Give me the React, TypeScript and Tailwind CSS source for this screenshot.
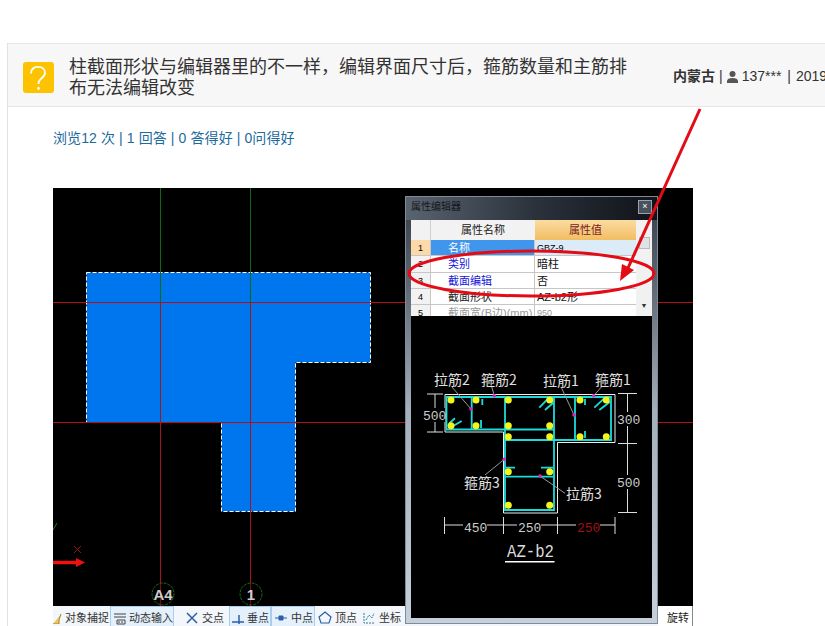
import React from "react";

const cjk = "font-['Liberation_Sans','Noto_Sans_CJK_SC',sans-serif]";

const rows = [
  { no: "1", name: "名称", value: "GBZ-9", active: true },
  { no: "2", name: "类别", value: "暗柱", blue: true },
  { no: "3", name: "截面编辑", value: "否", blue: true },
  { no: "4", name: "截面形状", value: "AZ-b2形" },
  { no: "5", name: "截面宽(B边)(mm)", value: "950", muted: true },
];

const PlanCanvas = () => (
  <svg width="640" height="418" viewBox="53 188 640 418" className="block">
    <rect x="53" y="188" width="640" height="418" fill="#000" />
    <polygon
      points="86.500,272.500 370.500,272.500 370.500,362.500 295.500,362.500 295.500,511.500 221.500,511.500 221.500,422.500 86.500,422.500"
      fill="#0076ee"
      stroke="#fff"
      strokeDasharray="4 2"
    />
    <path d="M160.500 188V302M250.500 188V302" stroke="#0c6a14" />
    <path d="M160.500 302V606M250.500 302V606" stroke="#a5141e" />
    <path d="M53 302.500H693M53 422.500H693" stroke="#b5101a" />
    <circle cx="163" cy="594" r="11" fill="#000" stroke="#1a6a1a" strokeDasharray="3 1" />
    <circle cx="251" cy="594" r="11" fill="#000" stroke="#1a6a1a" strokeDasharray="3 1" />
    <path d="M160.500 583V606M250.500 583V606" stroke="#a5141e" opacity="0.700" />
    <text x="163" y="600" textAnchor="middle" fill="#ccc" fontSize="15" fontFamily="Liberation Sans" fontWeight="700">
      A4
    </text>
    <text x="251" y="600" textAnchor="middle" fill="#ccc" fontSize="15" fontFamily="Liberation Sans" fontWeight="700">
      1
    </text>
    <path d="M53 562.500H78" stroke="#f01010" strokeWidth="3.500" />
    <path d="M76 558L85 562.500L76 567Z" fill="#f01010" />
    <path d="M74 546L81 553M81 546L74 553" stroke="#8a1818" />
    <path d="M53 530L57 523" stroke="#1a7a2a" />
  </svg>
);

const SectionDetail = () => {
  const bars = [
    [451, 400], [476, 400], [508.300, 400], [549.700, 400], [580, 400], [606.300, 400],
    [451, 425.700], [476, 425.700], [508.300, 425.700], [549.700, 425.700],
    [508.300, 436.700], [549.700, 436.700], [580, 436.700], [606.300, 436.700],
    [508.300, 471.700], [549.700, 471.700], [508.300, 505.300], [549.700, 505.300],
  ];
  const labels = [
    ["拉筋2", 434, 385], ["箍筋2", 481, 385], ["拉筋1", 543, 386], ["箍筋1", 595, 385],
    ["箍筋3", 464, 488], ["拉筋3", 566, 499],
  ] as const;
  const points = [
    [494.300, 395.700], [593.700, 395.700], [471, 409], [574, 415], [504.300, 459.300], [540, 476],
  ];
  return (
    <svg width="241" height="302" viewBox="411 316 241 302" className="block">
      <rect x="411" y="316" width="241" height="302" fill="#000" />
      <path d="M445 394.500H615V442.500H557.500V513H503.500V432H445Z" fill="none" stroke="#eee" />
      <path
        d="M446.500 397H611V440H554V510H505V429.500H446.500ZM505 397V429.500M554 397V440M505 429.500H554M505 440H554"
        fill="none"
        stroke="#19dcdc"
        strokeWidth="1.800"
      />
      <path
        d="M471.700 397V429M575 397V440M505 476.700H554M482.300 399V405M481 420V428M585 399V405M585 431V438M506 467.700H515M541 467.700H553"
        fill="none"
        stroke="#19dcdc"
        strokeWidth="1.800"
      />
      <path
        d="M539.300 407.700L548.300 398.300M545 410L553.300 402.700M594.300 407.700L605 397.700M599.300 410L610 401.700M449.300 423.300L455 418.300M449.300 428.300L461.700 421"
        stroke="#19dcdc"
        strokeWidth="1.800"
      />
      {bars.map(([x, y]) => (
        <circle key={`${x}-${y}`} cx={x} cy={y} r="3.500" fill="#f5f51a" />
      ))}
      <path
        d="M451.700 386.700L471 409M491.700 386.700L494.300 395.700M561.700 388.300L574 415M601.700 386.700L593.700 395.700M485 475L504.300 459.300M565 493.300L540 476"
        stroke="#999"
        fill="none"
      />
      {points.map(([x, y]) => (
        <circle key={`${x}-${y}`} cx={x} cy={y} r="1.800" fill="#e020c0" />
      ))}
      <g fill="#e0e0e0" fontSize="14" fontFamily="Noto Sans CJK SC, sans-serif">
        {labels.map(([text, x, y]) => (
          <text key={text} x={x} y={y}>
            {text}
          </text>
        ))}
      </g>
      <path d="M435 394V432M427 394H443M427 432H443" stroke="#ddd" fill="none" />
      <path d="M627.500 393.500V512.500M618 393.500H637M618 443.500H637M618 512.500H637" stroke="#ddd" fill="none" />
      <path d="M444.500 525H615M444.500 517V534M503.500 517V534M557.500 517V534M615 517V534" stroke="#ddd" fill="none" />
      <g fontSize="13" fontFamily="Liberation Mono, monospace" fill="#ccc">
        <rect x="423" y="408" width="22" height="14" fill="#000" />
        <text x="423" y="420">500</text>
        <rect x="616" y="412" width="24" height="14" fill="#000" />
        <text x="617" y="424">300</text>
        <rect x="616" y="475" width="24" height="14" fill="#000" />
        <text x="617" y="487">500</text>
        <rect x="463" y="519" width="24" height="14" fill="#000" />
        <text x="464" y="532">450</text>
        <rect x="517" y="519" width="24" height="14" fill="#000" />
        <text x="518" y="532">250</text>
        <rect x="576" y="519" width="24" height="14" fill="#000" />
        <text x="577" y="532" fill="#a01010">250</text>
      </g>
      <text x="507" y="557" fontSize="18" textLength="47" lengthAdjust="spacingAndGlyphs" fontFamily="Liberation Mono, monospace" fill="#ddd">
        AZ-b2
      </text>
      <path d="M505 561.700H554.500" stroke="#fff" strokeWidth="1.500" />
    </svg>
  );
};

const PropertyDialog = () => (
  <div className="absolute left-[352px] top-[8px] flex h-[428px] w-[253px] flex-col border border-[#7f8b98] bg-gradient-to-b from-[#333c47] via-[#a3afbb] to-[#c6d0da] px-[5px]">
    <div className="-mx-[5px] flex h-[23px] shrink-0 items-center justify-between bg-gradient-to-r from-[#5a6470] via-[#2c333d] to-[#101318] pb-[4px] pl-[5px] pr-[5px]">
      <span className="text-[10px] text-[#14181c]">属性编辑器</span>
      <span className="flex h-[14px] w-[14px] items-center justify-center border border-[#9aa3ad] bg-[#48525e] text-[9px] leading-none text-white">
        ×
      </span>
    </div>
    <div className="flex h-[96px] shrink-0 overflow-hidden bg-white">
      <div className="flex-1">
        <div className="flex h-[20px] text-[11px] text-[#222]">
          <div className="w-[20px] border-r border-[#d0d0d0] bg-[#f2f2f2]" />
          <div className="flex w-[104px] items-center justify-center bg-[#f2f2f2]">属性名称</div>
          <div className="flex flex-1 items-center justify-center bg-gradient-to-b from-[#fbdca0] to-[#f2bd62] text-[#7a1c1c]">
            属性值
          </div>
        </div>
        {rows.map((row) => (
          <div key={row.no} className="flex h-[16.300px] border-b border-[#c6c6c6] text-[11px] leading-[16px]">
            <div
              className={`flex w-[20px] justify-center border-r border-[#c6c6c6] text-[9px] ${
                row.active ? "bg-[#fbd9a8]" : "bg-[#f2f2f2]"
              }`}
            >
              {row.no}
            </div>
            <div
              className={`w-[104px] overflow-hidden whitespace-nowrap border-r border-[#c6c6c6] pl-[17px] ${
                row.active ? "bg-[#3f96ec] text-white" : row.blue ? "text-[#1414d8]" : row.muted ? "text-[#999]" : "text-[#222]"
              }`}
            >
              {row.name}
            </div>
            <div className={`flex-1 pl-[2px] ${row.active ? "bg-[#dcebf8] text-[9px]" : row.muted ? "text-[9px] text-[#999]" : "text-[#111]"}`}>
              {row.value}
            </div>
          </div>
        ))}
      </div>
      <div className="flex w-[16px] shrink-0 flex-col items-center bg-[#f1f1f1] pt-[17px]">
        <div className="h-[12px] w-[11px] border border-[#bbb] bg-[#dfe3e7]" />
        <span className="mt-auto pb-[7px] text-[7px] leading-none text-[#333]">▼</span>
      </div>
    </div>
    <SectionDetail />
  </div>
);

const SnapBar = () => {
  const tools = [
    { label: "对象捕捉", width: "w-[56px]", icon: 12, gap: "gap-0", active: false, shape: <path d="M0 12h6V8l2-6" stroke="#a8861e" fill="#e8c860" /> },
    { label: "动态输入", width: "w-[64px] ml-[1px]", icon: 14, gap: "gap-[2px]", active: true, shape: <path d="M1 3h12M1 6h12M4 9h8v4H4zM6 10v2M9 10v2" stroke="#444" fill="none" /> },
    { label: "交点", width: "w-[41px] ml-[11px]", icon: 14, gap: "gap-[3px]", active: false, shape: <path d="M2 2l10 10M12 2L2 12" stroke="#2a5fa8" strokeWidth="1.500" /> },
    { label: "垂点", width: "w-[42px] ml-[3px]", icon: 12, gap: "gap-[3px]", active: true, shape: <path d="M0 10h12M7 3v9" stroke="#2a5fa8" strokeWidth="1.500" /> },
    { label: "中点", width: "w-[44px]", icon: 14, gap: "gap-[3px]", active: true, shape: <path d="M1 7h12M5 5h4v4H5z" stroke="#2a5fa8" fill="#2a5fa8" /> },
    { label: "顶点", width: "w-[39px] ml-[3px]", icon: 14, gap: "gap-[3px]", active: false, shape: <path d="M7 1l6 5-2 6H3L1 6z" stroke="#2a5fa8" fill="none" strokeWidth="1.200" /> },
    { label: "坐标", width: "w-[39px] ml-[5px]", icon: 14, gap: "gap-[3px]", active: false, shape: <path d="M2 2v10h10M4 9l3-5 3 3 2-5" stroke="#2a7f9a" fill="none" strokeDasharray="2 1" /> },
  ];
  return (
    <div className="relative flex h-[24px] w-[640px] items-center bg-[#f3f6fa] text-[11px] text-[#333]">
      {tools.map((tool) => (
        <div
          key={tool.label}
          className={`flex h-[24px] shrink-0 items-center ${tool.gap} ${tool.width} ${
            tool.active ? "border border-[#a9cdec] bg-[#e4f0fb] pl-[2px]" : ""
          }`}
        >
          <svg width={tool.icon} height={tool.icon} viewBox={`0 0 ${tool.icon} ${tool.icon}`} className="shrink-0">
            {tool.shape}
          </svg>
          <span className="whitespace-nowrap">{tool.label}</span>
        </div>
      ))}
      <div className="ml-auto flex h-[24px] w-[35px] items-center justify-start border-r border-[#888] bg-white pl-[10px] pr-[2px] text-[#222]">
        <span className="-ml-[1px] whitespace-nowrap">旋转</span>
      </div>
    </div>
  );
};

const Annotation = () => (
  <svg className="pointer-events-none absolute left-0 top-0" width="825" height="626" viewBox="0 0 825 626">
    <ellipse cx="531.500" cy="273.500" rx="122.500" ry="22.500" fill="none" stroke="#e30b16" strokeWidth="3" />
    <path d="M700 109L628 268" stroke="#e30b16" strokeWidth="3" fill="none" />
    <path d="M620 281L622 264L634 270Z" fill="#e30b16" />
  </svg>
);

export default function App() {
  return (
    <div className={`relative h-[626px] w-[825px] overflow-hidden bg-white pl-[7px] pt-[43px] ${cjk}`}>
      <div className="h-[583px] w-[900px] border-l border-[#e2e2e2]">
        <div className="flex h-[64px] items-center border-y border-r border-[#e6e6e6] bg-[#f7f7f7] pl-[15px]">
          <svg width="31" height="31" viewBox="0 0 31 31" className="mt-[5px] shrink-0">
            <rect width="31" height="31" rx="3" fill="#fdc300" />
            <path
              d="M8 11.500C8 7 11 4.800 15 4.800C19 4.800 22 7.200 22 10.800C22 14 20 15.300 18 16.800C16.200 18.200 15.500 19.500 15.500 22"
              fill="none"
              stroke="#fff"
              strokeWidth="1.800"
            />
            <circle cx="15.500" cy="26.500" r="1.400" fill="#fff" />
          </svg>
          <h1 className="ml-[15px] mt-[5px] w-[560px] shrink-0 text-[18px] font-normal leading-[21px] text-[#333]">
            柱截面形状与编辑器里的不一样，编辑界面尺寸后，箍筋数量和主筋排布无法编辑改变
          </h1>
          <div className="ml-[44px] flex shrink-0 items-center whitespace-nowrap pt-[3px] text-[14px] text-[#333]">
            <span className="font-bold">内蒙古</span>
            <span className="ml-[4px] mr-[4px]">|</span>
            <svg width="11" height="12" viewBox="0 0 11 12" className="shrink-0">
              <circle cx="5.500" cy="3" r="3" fill="#555" />
              <path d="M0 12V10C0 8 2.500 7 5.500 7C8.500 7 11 8 11 10V12Z" fill="#555" />
            </svg>
            <span className="ml-[4px]">137***</span>
            <span className="ml-[6px] mr-[5px]">|</span>
            <span>2019-03-20</span>
          </div>
        </div>
        <div className="pl-[45px] pt-[21px]">
          <p className="text-[14px] leading-[20px] tracking-[0.1px] text-[#1d6a9c]">浏览12 次 | 1 回答 | 0 答得好 | 0问得好</p>
          <div className="relative mt-[40px] w-[640px]">
            <PlanCanvas />
            <SnapBar />
            <PropertyDialog />
          </div>
        </div>
      </div>
      <Annotation />
    </div>
  );
}
